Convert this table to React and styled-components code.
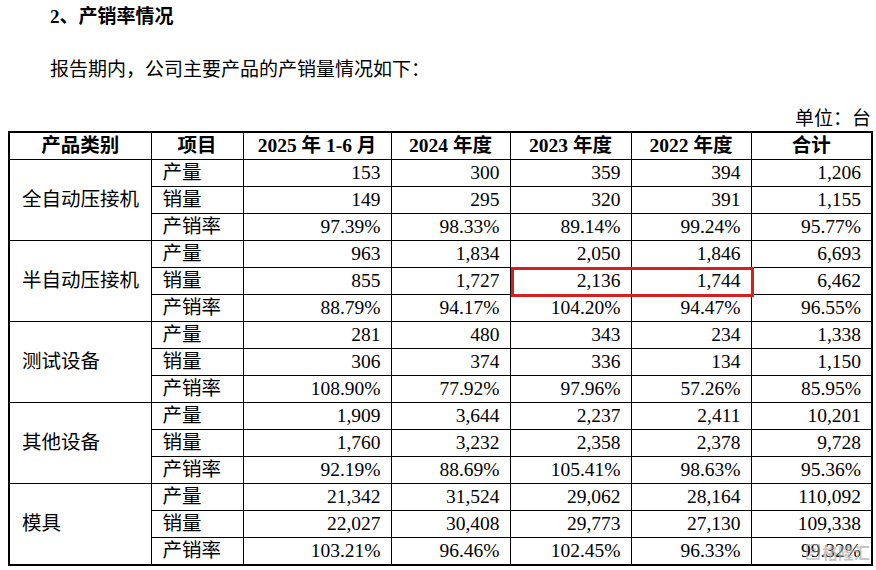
import React from 'react'
import styled, { createGlobalStyle } from 'styled-components'

const Global = createGlobalStyle`
  body {
    margin: 0;
    background: #fff;
    font-family: "Liberation Serif", "Noto Sans CJK SC", serif;
    color: #000;
  }
`

const Page = styled.div`
  width: 876px;
  height: 570px;
  position: relative;
  overflow: hidden;
`

const Title = styled.h2`
  margin: 0;
  padding-left: 50px;
  height: 34px;
  line-height: 34px;
  font-size: 19px;
  font-weight: bold;
`

const Para = styled.p`
  margin: 19px 0 0;
  padding-left: 50px;
  height: 34px;
  line-height: 34px;
  font-size: 19px;
`

const Unit = styled.div`
  margin-top: 20px;
  height: 24px;
  line-height: 24px;
  text-align: right;
  padding-right: 5px;
  font-size: 19px;
`

const Table = styled.table`
  margin: 0 0 0 8px;
  width: 863px;
  table-layout: fixed;
  border-collapse: collapse;
  border: 2px solid #000;
  font-size: 19.5px;
`

const Th = styled.th`
  height: 26px;
  padding: 0;
  border: 1.5px solid #000;
  font-weight: bold;
  text-align: center;
  line-height: 22px;
`

const Cat = styled.td`
  border: 1.5px solid #000;
  padding: 0 0 0 12px;
  text-align: left;
  vertical-align: middle;
  line-height: 22px;
`

const Item = styled.td`
  height: 26px;
  border: 1.5px solid #000;
  padding: 0 0 0 11px;
  line-height: 22px;
`

const Num = styled.td`
  position: relative;
  height: 26px;
  border: 1.5px solid #000;
  padding: 0 10px 0 0;
  text-align: right;
  line-height: 22px;
`

const Mark = styled.span`
  position: absolute;
  left: 0;
  top: -1px;
  width: 243px;
  height: 30px;
  box-sizing: border-box;
  border: 3px solid #d4201e;
  pointer-events: none;
`

const Watermark = styled.div`
  position: absolute;
  right: 6px;
  bottom: 6px;
  display: flex;
  align-items: center;
  gap: 2px;
  color: rgba(170, 170, 170, 0.7);
  font-family: "Noto Sans CJK SC", sans-serif;
  font-size: 16px;
  font-weight: bold;
`

const cols = [142, 92, 148, 119, 121, 120, 121]
const heads = ['产品类别', '项目', '2025 年 1-6 月', '2024 年度', '2023 年度', '2022 年度', '合计']
const labels = ['产量', '销量', '产销率']

const groups = [
  {
    name: '全自动压接机',
    rows: [
      ['153', '300', '359', '394', '1,206'],
      ['149', '295', '320', '391', '1,155'],
      ['97.39%', '98.33%', '89.14%', '99.24%', '95.77%'],
    ],
  },
  {
    name: '半自动压接机',
    rows: [
      ['963', '1,834', '2,050', '1,846', '6,693'],
      ['855', '1,727', '2,136', '1,744', '6,462'],
      ['88.79%', '94.17%', '104.20%', '94.47%', '96.55%'],
    ],
  },
  {
    name: '测试设备',
    rows: [
      ['281', '480', '343', '234', '1,338'],
      ['306', '374', '336', '134', '1,150'],
      ['108.90%', '77.92%', '97.96%', '57.26%', '85.95%'],
    ],
  },
  {
    name: '其他设备',
    rows: [
      ['1,909', '3,644', '2,237', '2,411', '10,201'],
      ['1,760', '3,232', '2,358', '2,378', '9,728'],
      ['92.19%', '88.69%', '105.41%', '98.63%', '95.36%'],
    ],
  },
  {
    name: '模具',
    rows: [
      ['21,342', '31,524', '29,062', '28,164', '110,092'],
      ['22,027', '30,408', '29,773', '27,130', '109,338'],
      ['103.21%', '96.46%', '102.45%', '96.33%', '99.32%'],
    ],
  },
]

const App = () => (
  <Page>
    <Global />
    <Title>2、产销率情况</Title>
    <Para>报告期内，公司主要产品的产销量情况如下：</Para>
    <Unit>单位：台</Unit>
    <Table>
      <colgroup>
        {cols.map((w, i) => (
          <col key={i} style={{ width: w }} />
        ))}
      </colgroup>
      <thead>
        <tr>
          {heads.map((h) => (
            <Th key={h}>{h}</Th>
          ))}
        </tr>
      </thead>
      <tbody>
        {groups.map((g, gi) =>
          g.rows.map((r, ri) => (
            <tr key={g.name + ri}>
              {ri === 0 && <Cat rowSpan={3}>{g.name}</Cat>}
              <Item>{labels[ri]}</Item>
              {r.map((v, vi) => (
                <Num key={vi}>
                  {v}
                  {gi === 1 && ri === 1 && vi === 2 && <Mark />}
                </Num>
              ))}
            </tr>
          ))
        )}
      </tbody>
    </Table>
    <Watermark>
      <svg width="14" height="16" viewBox="0 0 14 16">
        <rect x="1" y="1" width="12" height="14" fill="none" stroke="currentColor" strokeWidth="1.5" />
        <path d="M4 5h6M4 8h6M4 11h4" stroke="currentColor" strokeWidth="1.3" />
      </svg>
      格隆汇
    </Watermark>
  </Page>
)

export default App
